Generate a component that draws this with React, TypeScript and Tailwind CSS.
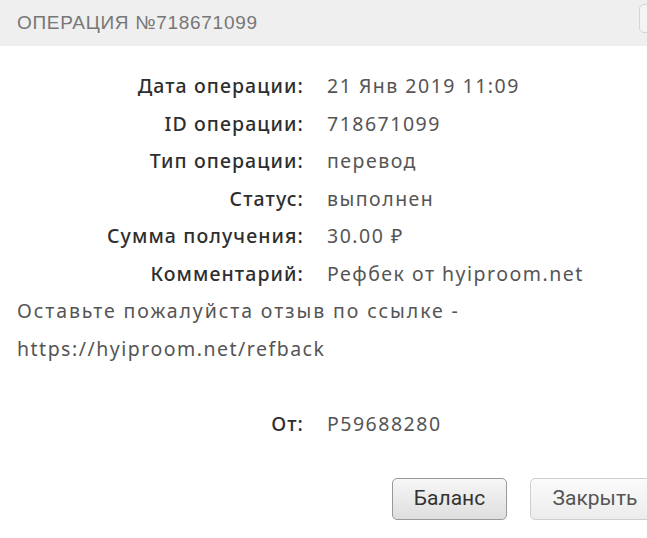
import type { ReactNode } from "react";

type Row = { label: string; value: ReactNode };

const rows: Row[] = [
  { label: "Дата операции:", value: "21 Янв 2019 11:09" },
  { label: "ID операции:", value: "718671099" },
  { label: "Тип операции:", value: "перевод" },
  { label: "Статус:", value: "выполнен" },
  { label: "Сумма получения:", value: "30.00 ₽" },
  { label: "Комментарий:", value: "Рефбек от hyiproom.net" },
];

function InfoRow({ label, value }: Row) {
  return (
    <div className="grid grid-cols-[304px_1fr] gap-x-[23px] h-[37.5px] items-center">
      <div className="text-right font-medium tracking-[1.1px] text-[#2e2e2e]">{label}</div>
      <div className="text-[#555]">{value}</div>
    </div>
  );
}

export default function App() {
  return (
    <div className="w-[647px] h-[538px] bg-white overflow-hidden">
      <div className="flex items-center h-[46px] bg-[#efefef] pl-[17px]">
        <div
          className="text-[19px] tracking-[0.7px] text-[#777]"
          style={{ fontFamily: '"Liberation Sans", sans-serif' }}
        >
          ОПЕРАЦИЯ №718671099
        </div>
        <div className="ml-auto mr-[-32px] self-start mt-[4px] w-[40px] h-[29px] rounded-[5px] border border-[#d4d4d4] bg-[#f4f4f4]" />
      </div>

      <div
        className="pt-[21px] text-[19.5px] leading-[37.5px] tracking-[1.5px]"
        style={{ fontFamily: '"Noto Sans", sans-serif' }}
      >
        {rows.map((r) => (
          <InfoRow key={r.label} {...r} />
        ))}
        <p className="pl-[17px] text-[#555] tracking-[1.9px]">
          Оставьте пожалуйста отзыв по ссылке -
          <br />
          <span className="tracking-[1.5px]">https://hyiproom.net/refback</span>
        </p>
        <div className="h-[37.5px]" />
        <InfoRow label="От:" value="P59688280" />
      </div>

      <div
        className="flex gap-[23px] pl-[392px] mt-[36px] text-[21px]"
        style={{ fontFamily: "Roboto, sans-serif" }}
      >
        <button className="w-[115px] h-[42px] shrink-0 rounded-[5px] border border-[#999] bg-gradient-to-b from-[#f7f7f7] to-[#dedede] text-[#333]">
          Баланс
        </button>
        <button className="w-[130px] h-[42px] shrink-0 rounded-[5px] border border-[#cfcfcf] bg-gradient-to-b from-[#fbfbfb] to-[#ececec] text-[#555]">
          Закрыть
        </button>
      </div>
    </div>
  );
}
